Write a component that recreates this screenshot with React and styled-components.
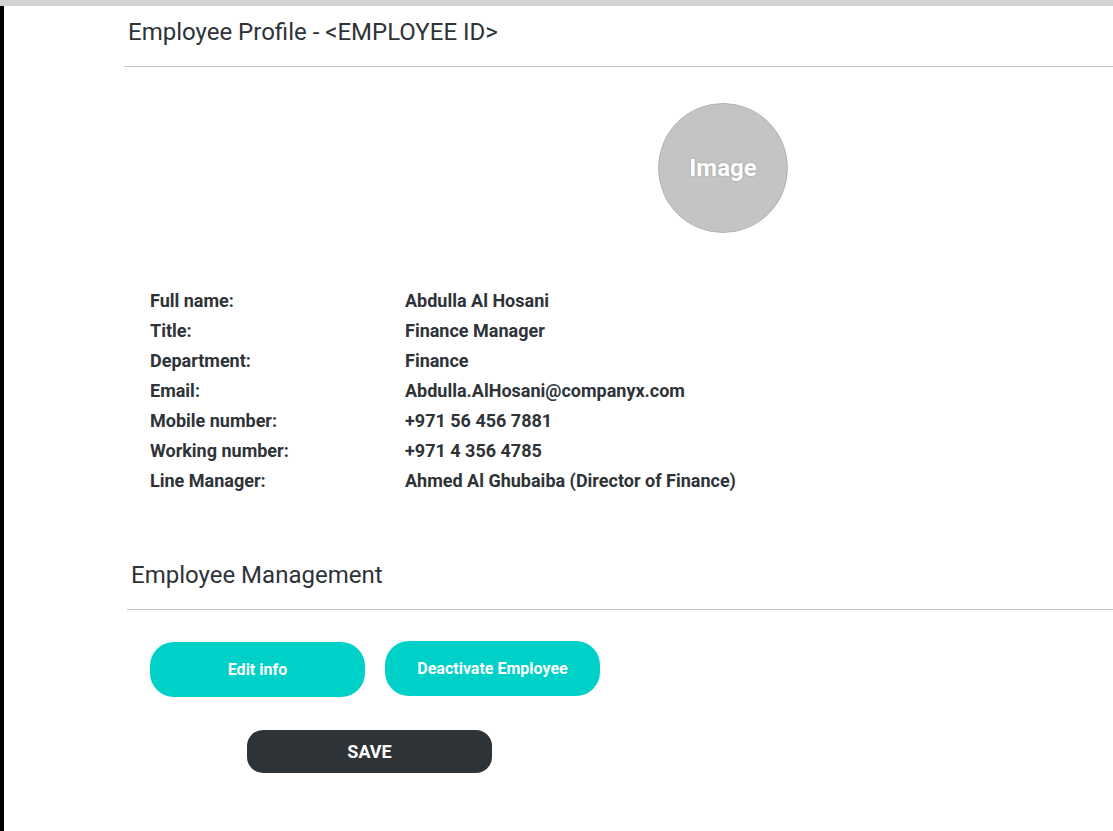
import React from "react";
import styled, { createGlobalStyle } from "styled-components";

const GlobalStyle = createGlobalStyle`
  html, body {
    margin: 0;
    padding: 0;
    background: #ffffff;
    font-family: Roboto, "Liberation Sans", sans-serif;
    color: #2e3338;
  }
`;

const TopBar = styled.div`
  height: 6px;
  background: #d3d3d3;
`;

const Page = styled.div`
  display: flex;
  min-height: 825px;
`;

const Rail = styled.div`
  width: 4px;
  background: #000000;
`;

const Main = styled.main`
  flex: 1;
  display: flex;
  flex-direction: column;
`;

const SectionHeader = styled.div`
  margin-left: ${(p) => p.indent}px;
  padding: ${(p) => p.top}px 0 ${(p) => p.bottom}px 4px;
  border-bottom: 1px solid #c4c4c4;
  font-size: 24px;
  line-height: 26px;
  font-weight: 400;
  color: #2e3338;
`;

const AvatarRow = styled.div`
  display: flex;
  padding: 36px 0 0 654px;
`;

const Avatar = styled.div`
  width: 128px;
  height: 128px;
  border-radius: 50%;
  background: #c4c4c4;
  border: 1px solid #b3b3b3;
  display: flex;
  align-items: center;
  justify-content: center;
  color: #ffffff;
  font-size: 24px;
  font-weight: 700;
  text-shadow: 0 0 2px rgba(0, 0, 0, 0.25);
`;

const Details = styled.dl`
  display: grid;
  grid-template-columns: 255px auto;
  grid-auto-rows: 30px;
  align-items: center;
  margin: 52px 0 0 146px;
  font-size: 18px;
  font-weight: 700;
  color: #2e3338;
`;

const Label = styled.dt`
  margin: 0;
`;

const Value = styled.dd`
  margin: 0;
`;

const ButtonRow = styled.div`
  display: flex;
  align-items: flex-start;
  gap: 20px;
  margin: 32px 0 0 146px;
`;

const ActionButton = styled.button`
  width: 215px;
  height: 55px;
  margin-top: ${(p) => (p.raised ? -1 : 0)}px;
  border: none;
  border-radius: 24px;
  background: #00d1c8;
  color: #ffffff;
  font-family: Roboto, "Liberation Sans", sans-serif;
  font-size: 16px;
  font-weight: 700;
  cursor: pointer;
`;

const SaveButton = styled.button`
  align-self: flex-start;
  margin: 33px 0 0 243px;
  width: 245px;
  height: 43px;
  border: none;
  border-radius: 16px;
  background: #2e3338;
  color: #ffffff;
  font-family: Roboto, "Liberation Sans", sans-serif;
  font-size: 18px;
  font-weight: 700;
  cursor: pointer;
`;

const profile = [
  ["Full name:", "Abdulla Al Hosani"],
  ["Title:", "Finance Manager"],
  ["Department:", "Finance"],
  ["Email:", "Abdulla.AlHosani@companyx.com"],
  ["Mobile number:", "+971 56 456 7881"],
  ["Working number:", "+971 4 356 4785"],
  ["Line Manager:", "Ahmed Al Ghubaiba (Director of Finance)"],
];

export default function App() {
  return (
    <>
      <GlobalStyle />
      <TopBar />
      <Page>
        <Rail />
        <Main>
          <SectionHeader indent={120} top={13} bottom={21}>
            Employee Profile - &lt;EMPLOYEE ID&gt;
          </SectionHeader>
          <AvatarRow>
            <Avatar>Image</Avatar>
          </AvatarRow>
          <Details>
            {profile.map(([label, value]) => (
              <React.Fragment key={label}>
                <Label>{label}</Label>
                <Value>{value}</Value>
              </React.Fragment>
            ))}
          </Details>
          <SectionHeader indent={123} top={67} bottom={21}>
            Employee Management
          </SectionHeader>
          <ButtonRow>
            <ActionButton>Edit info</ActionButton>
            <ActionButton raised>Deactivate Employee</ActionButton>
          </ButtonRow>
          <SaveButton>SAVE</SaveButton>
        </Main>
      </Page>
    </>
  );
}
